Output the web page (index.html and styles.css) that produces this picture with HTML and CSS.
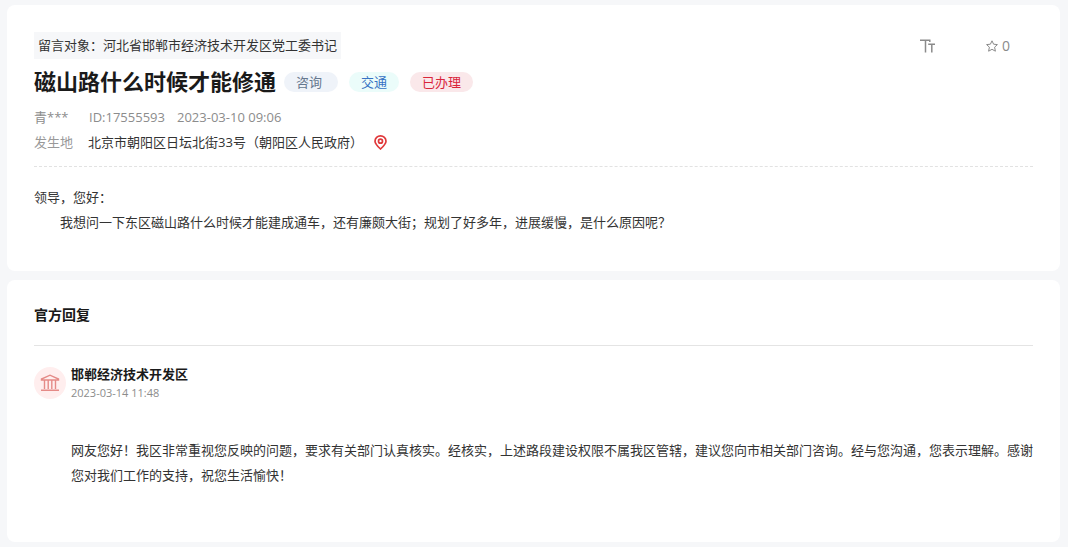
FILE: index.html
```
<!DOCTYPE html>
<html lang="zh-CN">
<head>
<meta charset="UTF-8" />
<meta name="viewport" content="width=device-width, initial-scale=1" />
<title>磁山路什么时候才能修通</title>
<link rel="stylesheet" href="styles.css">
</head>
<body>
  <main>
    <article class="card message">
      <div class="message-top">
        <p class="target">留言对象：河北省邯郸市经济技术开发区党工委书记</p>
        <div class="tools">
          <button type="button" class="tool" aria-label="字号">
            <svg width="16" height="14" viewBox="0 0 16 14" fill="none" stroke="currentColor" stroke-width="1.5">
              <path d="M0 1.2H10.5M5.5 1.2V13.5M8.2 5.2H15M11.8 5.2V13.5M9.8 1V3" />
            </svg>
          </button>
          <button type="button" class="tool" aria-label="收藏">
            <svg width="12" height="12" viewBox="0 0 12 12" fill="none" stroke="currentColor" stroke-linejoin="round">
              <path d="M6 .8L7.6 4.2L11.4 4.6L8.6 7.2L9.4 11.2L6 9.3L2.6 11.2L3.4 7.2L.6 4.6L4.4 4.2Z" />
            </svg>
            <span>0</span>
          </button>
        </div>
      </div>

      <div class="title-row">
        <h1>磁山路什么时候才能修通</h1>
        <div class="tags">
          <span class="tag tag-type">咨询</span>
          <span class="tag tag-field">交通</span>
          <span class="tag tag-done">已办理</span>
        </div>
      </div>

      <div class="meta">
        <span class="user">青***</span>
        <span class="message-id">ID:17555593</span>
        <time datetime="2023-03-10T09:06">2023-03-10 09:06</time>
      </div>
      <div class="place">
        <span class="place-label">发生地</span>
        <span>北京市朝阳区日坛北街33号（朝阳区人民政府）</span>
        <button type="button" class="pin" aria-label="查看地图">
          <svg width="13" height="15" viewBox="0 0 13 15" fill="none" stroke="currentColor" stroke-width="1.7">
            <path d="M6.5 14C3.2 10.9 1 8.7 1 6.2A5.5 5.3 0 0 1 12 6.2C12 8.7 9.8 10.9 6.5 14Z" />
            <circle cx="6.5" cy="6.2" r="2" />
          </svg>
        </button>
      </div>

      <div class="message-text">
        <p>领导，您好：</p>
        <p class="indent">我想问一下东区磁山路什么时候才能建成通车，还有廉颇大街；规划了好多年，进展缓慢，是什么原因呢？</p>
      </div>
    </article>

    <section class="card reply">
      <h2>官方回复</h2>
      <div class="reply-head">
        <div class="avatar">
          <svg width="20" height="18" viewBox="0 0 20 18" fill="none" stroke="currentColor" stroke-width="1.4">
            <path d="M1.5 6V5L10 1.2L18.5 5V6ZM4.5 6V15M8.2 6V15M11.8 6V15M15.5 6V15M1 16.3H19" />
          </svg>
        </div>
        <div>
          <h3>邯郸经济技术开发区</h3>
          <time datetime="2023-03-14T11:48">2023-03-14 11:48</time>
        </div>
      </div>
      <p class="reply-text">网友您好！我区非常重视您反映的问题，要求有关部门认真核实。经核实，上述路段建设权限不属我区管辖，建议您向市相关部门咨询。经与您沟通，您表示理解。感谢您对我们工作的支持，祝您生活愉快！</p>
    </section>
  </main>
</body>
</html>
```
FILE: styles.css
```
* {
  box-sizing: border-box;
}
body {
  margin: 0;
  padding: 5px 8px 5px 7px;
  background-color: #f6f7f9;
  color: #333;
  font-family: "Open Sans", "Noto Sans CJK SC", sans-serif;
  font-size: 13px;
  line-height: 25px;
}
h1, h2, h3, p {
  margin: 0;
}
button {
  padding: 0;
  border: none;
  background: none;
  font: inherit;
  cursor: pointer;
}
main {
  display: flex;
  flex-direction: column;
  gap: 9px;
}
.card {
  padding: 27px 27px 36px;
  border-radius: 8px;
  background-color: #fff;
}

/* message */
.message-top {
  display: flex;
  justify-content: space-between;
  align-items: center;
}
.target {
  padding: 0 4px;
  background-color: #f6f7f9;
  line-height: 27px;
}
.tools {
  display: flex;
  gap: 50px;
  padding-right: 23px;
}
.tool {
  display: flex;
  align-items: center;
  gap: 4px;
  color: #8a8a8a;
  font-size: 14px;
  line-height: 27px;
}
.title-row {
  display: flex;
  align-items: center;
  gap: 8px;
  height: 46px;
}
h1 {
  padding-bottom: 2px;
  color: #1a1a1a;
  font-size: 22px;
  line-height: 42px;
}
.tags {
  display: flex;
  gap: 11px;
}
.tag {
  padding: 0 12px;
  border-radius: 10px;
  line-height: 20px;
}
.tag-type {
  padding-right: 16px;
  background-color: #eff3f9;
  color: #66788f;
}
.tag-field {
  background-color: #ebfcfa;
  color: #3672c4;
}
.tag-done {
  background-color: #fae8ea;
  color: #d9263a;
}
.meta {
  display: flex;
  color: #8c8c8c;
}
.user {
  min-width: 55px;
}
.message-id {
  min-width: 88px;
}
.place {
  display: flex;
  align-items: center;
}
.place-label {
  margin-right: 15px;
  color: #999;
}
.pin {
  display: flex;
  margin-left: 11px;
  color: #e0393b;
}
.message-text {
  margin-top: 11px;
  padding-top: 18px;
  border-top: 1px dashed #e2e2e2;
}
.indent {
  text-indent: 2em;
}

/* official reply */
.reply {
  padding-top: 22px;
  padding-bottom: 54px;
}
h2 {
  padding-bottom: 17px;
  border-bottom: 1px solid #e4e4e4;
  color: #1a1a1a;
  font-size: 14px;
  line-height: 26px;
}
.reply-head {
  display: flex;
  align-items: center;
  gap: 5px;
  margin-top: 18px;
}
.avatar {
  display: flex;
  align-items: center;
  justify-content: center;
  width: 32px;
  height: 32px;
  border-radius: 50%;
  background-color: #ffeeee;
  color: #e58a87;
}
h3 {
  color: #1a1a1a;
  font-size: 13px;
  line-height: 20px;
}
.reply-head time {
  display: block;
  color: #8c8c8c;
  font-size: 11px;
  line-height: 18px;
}
.reply-text {
  margin-top: 36px;
  padding-left: 37px;
}
```
